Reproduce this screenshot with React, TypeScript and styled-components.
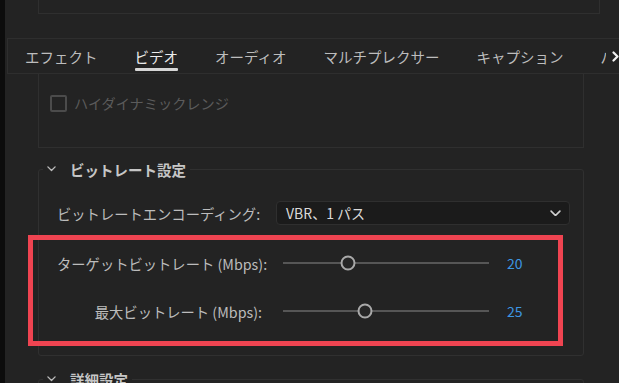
// ||||||||||||||||||||||||||||| Dependances ||||||||||||||||||||||||||||||||||||

import React from "react";
import styled, { createGlobalStyle } from "styled-components";

// ||||||||||||||||||||||||||||| Global ||||||||||||||||||||||||||||||||||||

const GlobalStyle = createGlobalStyle`
  html, body {
    margin: 0;
    padding: 0;
    background: #232323;
  }
  body {
    font-family: "Noto Sans CJK JP", "Noto Sans", sans-serif;
    color: #c4c4c4;
  }
`;

// ||||||||||||||||||||||||||||| Layout ||||||||||||||||||||||||||||||||||||

const Screen = styled.div`
  position: relative;
  display: flex;
  align-items: flex-start;
  width: 619px;
  height: 383px;
  overflow: hidden;
  background: #232323;
`;

const SideStrip = styled.div`
  width: 5px;
  height: 100%;
  flex: none;
  background: #0c0c0c;
`;

const Main = styled.div`
  flex: 1;
  display: flex;
  flex-direction: column;
  min-width: 0;

  & > * {
    flex-shrink: 0;
  }
`;

const TopPanel = styled.div`
  box-sizing: border-box;
  height: 14px;
  margin: 0 19px 0 33px;
  border: 1px solid #2f2f2f;
  border-top: none;
`;

// ||||||||||||||||||||||||||||| Tabs ||||||||||||||||||||||||||||||||||||

const TabBar = styled.div`
  position: relative;
  box-sizing: border-box;
  height: 36px;
  margin: 24px 0 0 2px;
  padding-left: 17px;
  display: flex;
  align-items: center;
  gap: 37px;
  border: 1px solid #2e2e2e;
  border-right: none;
  overflow: hidden;
  white-space: nowrap;
`;

const Tab = styled.div<{ $active?: boolean }>`
  position: relative;
  flex: none;
  height: 100%;
  display: flex;
  align-items: center;
  font-size: 14.5px;
  color: ${(p) => (p.$active ? "#ececec" : "#bdbdbd")};

  &::after {
    content: "";
    display: ${(p) => (p.$active ? "block" : "none")};
    position: absolute;
    left: 0;
    right: 0;
    bottom: 2px;
    height: 3px;
    border-radius: 1px;
    background: #d6d6d6;
  }
`;

const ScrollArrow = styled.div`
  position: absolute;
  top: 0;
  right: 0;
  bottom: 0;
  width: 13px;
  display: flex;
  align-items: center;
  justify-content: flex-end;
  background: #232323;
`;

// ||||||||||||||||||||||||||||| Content ||||||||||||||||||||||||||||||||||||

const Content = styled.div`
  width: 546px;
  margin-left: 33px;
  display: flex;
  flex-direction: column;

  & > * {
    flex-shrink: 0;
  }
`;

const HdrBox = styled.div`
  box-sizing: border-box;
  height: 74px;
  padding: 19px 11px 0;
  border: 1px solid #2f2f2f;
  border-top: none;
`;

const CheckRow = styled.label`
  display: flex;
  align-items: center;
  gap: 7px;
  font-size: 14.2px;
  color: #5b5b5b;
`;

const CheckBox = styled.span`
  box-sizing: border-box;
  width: 17px;
  height: 17px;
  border: 2px solid #4b4b4b;
  border-radius: 2px;
`;

const Group = styled.fieldset<{ $top: number }>`
  box-sizing: border-box;
  margin: ${(p) => p.$top}px 0 0;
  padding: 22px 0 20px 18px;
  min-width: 0;
  border: 1px solid #303030;
  border-radius: 3px;
`;

const Legend = styled.legend`
  margin-left: -14px;
  padding: 0 4px;
  height: 20px;
  display: flex;
  align-items: center;
  gap: 14px;
  font-size: 14.5px;
  font-weight: bold;
  color: #c6c6c6;
`;

const Row = styled.div<{ $height: number }>`
  height: ${(p) => p.$height}px;
  display: flex;
  align-items: center;
`;

const Label = styled.div<{ $align?: string }>`
  width: 205px;
  flex: none;
  text-align: ${(p) => p.$align || "right"};
  font-size: 14.3px;
  color: #bcbcbc;
  white-space: nowrap;
  direction: ${(p) => (p.$align === "left" ? "ltr" : "rtl")};
  unicode-bidi: plaintext;
`;

const Select = styled.div`
  box-sizing: border-box;
  width: 294px;
  height: 24px;
  margin-left: 14px;
  padding: 0 8px 0 9px;
  display: flex;
  align-items: center;
  justify-content: space-between;
  background: #1b1b1b;
  border: 1px solid #2f2f2f;
  border-radius: 4px;
  font-size: 14px;
  color: #dadada;
`;

const Slider = styled.div`
  position: relative;
  width: 220px;
  height: 20px;
  margin-left: 14px;
  padding: 0 7px;
  box-sizing: border-box;
  display: flex;
  align-items: center;
`;

const Track = styled.div`
  position: relative;
  flex: 1;
  height: 2px;
  background: #565656;
`;

const Thumb = styled.span`
  position: absolute;
  top: 50%;
  box-sizing: border-box;
  width: 15px;
  height: 15px;
  transform: translate(-50%, -50%);
  border: 2.5px solid #a9a9a9;
  border-radius: 50%;
  background: #262626;
`;

const Value = styled.span`
  margin-left: 11px;
  font-size: 14px;
  color: #3d96e2;
`;

const Highlight = styled.div`
  position: absolute;
  left: 28px;
  top: 235px;
  width: 535px;
  height: 111px;
  box-sizing: border-box;
  border: 5px solid #ef4451;
  pointer-events: none;
`;

// ||||||||||||||||||||||||||||| Icons ||||||||||||||||||||||||||||||||||||

const Chevron = ({ w = 9, color = "#bdbdbd" }: { w?: number; color?: string }) => (
  <svg width={w} height={w * 0.6} viewBox="0 0 10 6" fill="none">
    <polyline points="1,1 5,5 9,1" stroke={color} strokeWidth="1.5" strokeLinecap="round" strokeLinejoin="round" />
  </svg>
);

const ChevronRight = () => (
  <svg width="7" height="11" viewBox="0 0 7 11" fill="none">
    <polyline points="1.5,1.5 5.5,5.5 1.5,9.5" stroke="#f2f2f2" strokeWidth="2.2" strokeLinecap="round" strokeLinejoin="round" />
  </svg>
);

// ||||||||||||||||||||||||||||| Data ||||||||||||||||||||||||||||||||||||

const tabs = ["エフェクト", "ビデオ", "オーディオ", "マルチプレクサー", "キャプション", "パブリッシュ"];

const sliders = [
  { label: "ターゲットビットレート (Mbps):", value: 20, ratio: 0.316 },
  { label: "最大ビットレート (Mbps):", value: 25, ratio: 0.398 },
];

// ||||||||||||||||||||||||||||| App ||||||||||||||||||||||||||||||||||||

export default function App() {
  return (
    <>
      <GlobalStyle />
      <Screen>
        <SideStrip />
        <Main>
          <TopPanel />
          <TabBar>
            {tabs.map((t) => (
              <Tab key={t} $active={t === "ビデオ"}>
                {t}
              </Tab>
            ))}
            <ScrollArrow>
              <ChevronRight />
            </ScrollArrow>
          </TabBar>

          <Content>
            <HdrBox>
              <CheckRow>
                <CheckBox />
                ハイダイナミックレンジ
              </CheckRow>
            </HdrBox>

            <Group $top={11}>
              <Legend>
                <Chevron />
                ビットレート設定
              </Legend>
              <Row $height={24}>
                <Label $align="left">ビットレートエンコーディング:</Label>
                <Select>
                  <span>VBR、1 パス</span>
                  <Chevron w={11} color="#d0d0d0" />
                </Select>
              </Row>
              <Row $height={14} />
              {sliders.map((s) => (
                <Row key={s.label} $height={48}>
                  <Label>{s.label}</Label>
                  <Slider>
                    <Track>
                      <Thumb style={{ left: `${s.ratio * 100}%` }} />
                    </Track>
                  </Slider>
                  <Value>{s.value}</Value>
                </Row>
              ))}
            </Group>

            <Group $top={13}>
              <Legend>
                <Chevron />
                詳細設定
              </Legend>
              <Row $height={60} />
            </Group>
          </Content>
        </Main>
        <Highlight />
      </Screen>
    </>
  );
}
